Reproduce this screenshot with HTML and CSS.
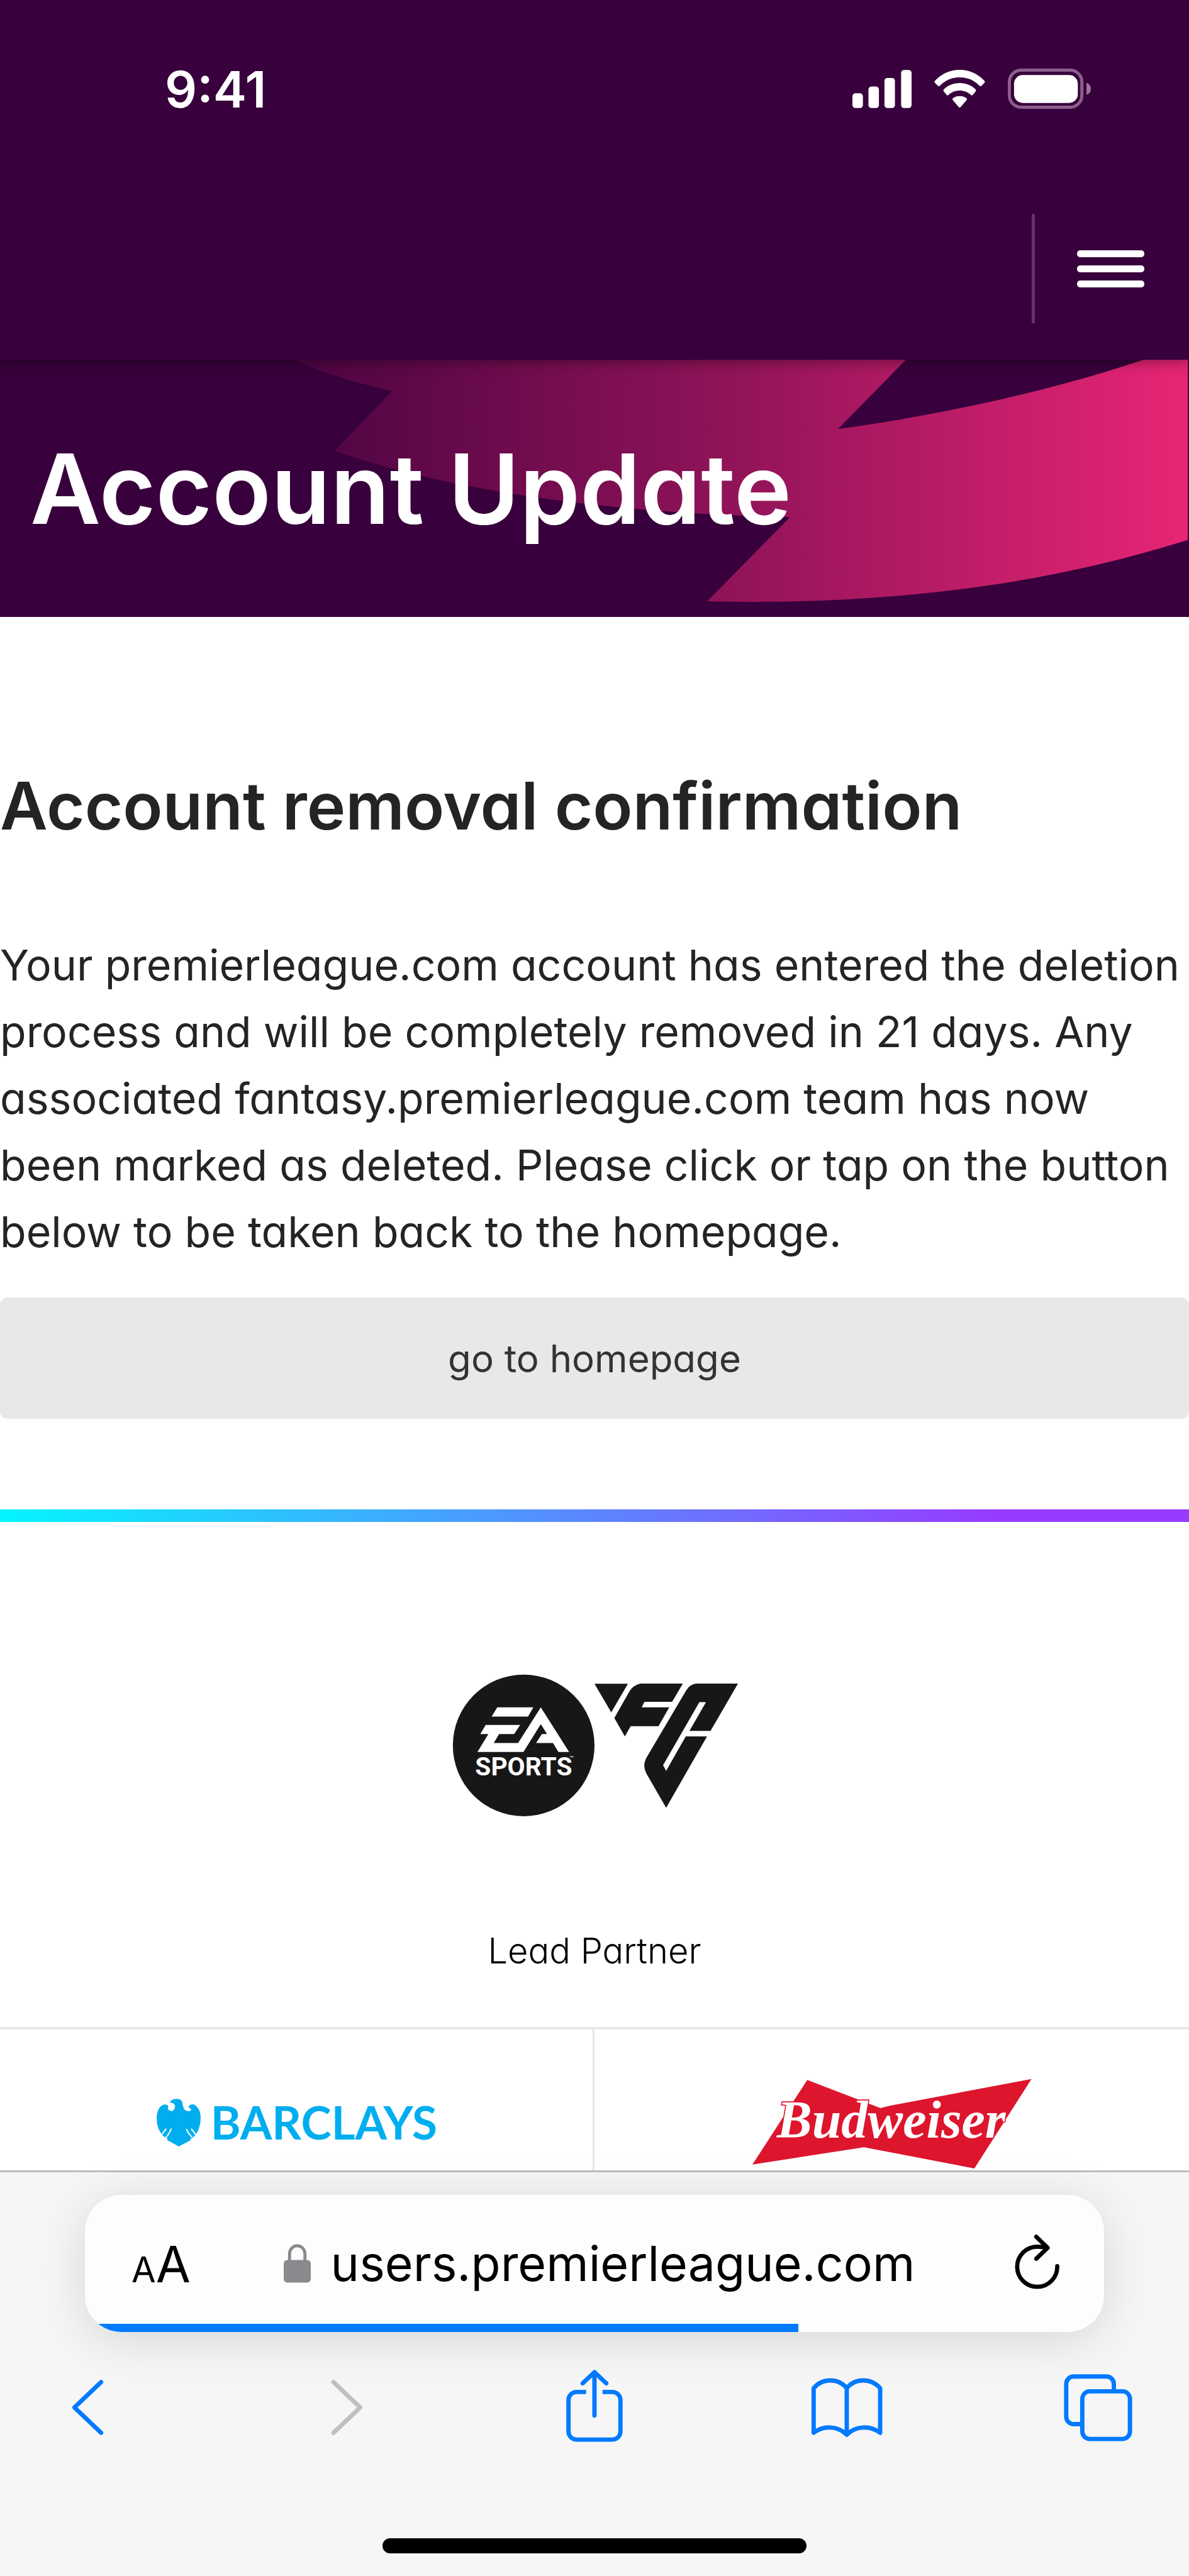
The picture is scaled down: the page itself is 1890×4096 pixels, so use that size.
FILE: index.html
```html
<!DOCTYPE html>
<html lang="en">
<head>
<meta charset="utf-8">
<meta name="viewport" content="width=device-width, initial-scale=1">
<title>Account Update</title>
<link rel="stylesheet" href="styles.css">
</head>
<body>
<div class="screen">
  <header class="top">
    <div class="status">
      <time class="status-time">9:41</time>
      <div class="status-icons">
        <svg class="icon-signal" viewBox="0 0 96 62" aria-hidden="true"><g fill="#fff"><rect x="0" y="38" width="17" height="24" rx="5"/><rect x="26" y="27" width="17" height="35" rx="5"/><rect x="52" y="13" width="17" height="49" rx="5"/><rect x="79" y="0" width="17" height="62" rx="5"/></g></svg>
        <svg class="icon-wifi" viewBox="0 0 82 62" aria-hidden="true"><g fill="#fff"><path d="M1.5 17.5C11 7 25 0 41 0S71 7 80.500 17.500Q82.500 19.500 80.500 21.500L76 26Q74.500 27.500 72.500 25.500C65 17.500 54 12.300 41 12.300S17 17.500 9.500 25.500Q7.500 27.500 6 26L1.500 21.500Q-.5 19.500 1.500 17.500Z"/><path d="M15.500 31.500C22 25 31 21.300 41 21.300S60 25 66.500 31.500Q68 33.500 66.500 35L62 40.500Q60.500 42 59 40.500C54 36 48 33.500 41 33.500S28 36 23 40.500Q21.500 42 20 40.500L15.500 35Q14 33.500 15.500 31.500Z"/><path d="M30 46C33 43.300 37 42.300 41 42.300S49 43.300 52 46Q53.500 47.500 52 49L42.500 60Q41 61.500 39.500 60L30 49Q28.500 47.500 30 46Z"/></g></svg>
        <svg class="icon-battery" viewBox="0 0 134 66" aria-hidden="true"><rect x="2.500" y="2.500" width="117" height="60" rx="19" fill="none" stroke="#8b5f8c" stroke-width="5"/><rect x="10" y="10.500" width="103" height="45" rx="14" fill="#fff"/><path d="M127 22.500Q134 26 134 33T127 42.500Z" fill="#9c789d"/></svg>
      </div>
    </div>
    <nav class="nav">
      <button class="menu" type="button" aria-label="Menu"><span></span><span></span><span></span></button>
    </nav>
  </header>

  <main class="page">
    <section class="banner">
      <svg class="ribbon" viewBox="0 581 1920 416" preserveAspectRatio="xMaxYMin slice" aria-hidden="true">
        <defs><linearGradient id="pink" gradientUnits="userSpaceOnUse" x1="475" y1="0" x2="1918" y2="0"><stop offset="0" stop-color="#4c0442"/><stop offset=".5" stop-color="#921459"/><stop offset="1" stop-color="#e82575"/></linearGradient></defs>
        <path fill="url(#pink)" d="M475 581H1463L1353 693C1510 672 1700 631 1846 581H1918V872C1740 928 1490 980 1142 971L1276 835C1000 830 730 795 540 728L633 632C570 617 515 600 475 581Z"/>
      </svg>
      <h1>Account Update</h1>
    </section>

    <section class="message">
      <h2>Account removal confirmation</h2>
      <p>Your premierleague.com account has entered the deletion process and will be completely removed in 21 days. Any associated fantasy.premierleague.com team has now been marked as deleted. Please click or tap on the button below to be taken back to the homepage.</p>
      <a class="home-button" href="#">go to homepage</a>
    </section>

    <section class="partners">
      <div class="lead">
        <svg class="ea-logo" viewBox="0 0 1560 840" role="img" aria-label="EA Sports FC">
          <g fill="#171717"><circle cx="437" cy="418" r="343"/><path d="M780 119H942L861 258Z"/><path d="M876 285L947 160Q968 124 1005 118H1208L1156 207H1022L1009 233H1142L1090 325H955L927 374Z"/><path d="M1222 155Q1240 122 1272 118H1475L1342 348H1240L1320 208H1288L1112 514L1127 541L1222 374H1325L1127 720L1030 552Q1012 515 1030 480Z"/></g>
          <g fill="#fff"><path d="M309 233H484L458 278H282Z"/><path d="M253 319H420L391 363H318L292 406H410L520 233L657 450H605L579 406H497L525 363H550L520 315L436 450H213L266 363H227Z"/><text class="ea-word" x="437" y="562" text-anchor="middle">SPORTS</text><text class="ea-mark" x="660" y="494">™</text></g>
        </svg>
        <p>Lead Partner</p>
      </div>
      <div class="partner-row">
        <div class="partner">
          <svg class="partner-logo" viewBox="0 0 451 80" role="img" aria-label="Barclays">
            <g transform="scale(.357 .333) translate(-147 -395)"><path fill="#00aeef" d="M207 414Q212 396 240 396Q262 398 263 415Q266 440 275 450Q283 457 296 455Q306 450 303 445Q290 440 292 432Q300 420 315 423Q346 440 346 490Q345 530 330 559L317 578L300 590V597L247 627L193 595L197 588L177 577L165 560Q147 530 147 490Q148 435 180 423Q198 423 201 434Q195 438 199 448Q206 457 218 455Q230 448 230 430Q228 415 207 414Z"/><path stroke="#fff" stroke-width="6" fill="none" d="M190 541L169 571M213 540Q205 565 189 582M303 541L325 571M281 542Q290 565 307 582"/></g>
            <text class="barclays" x="87" y="66">BARCLAYS</text>
          </svg>
        </div>
        <div class="partner">
          <svg class="partner-logo" viewBox="104 85 1354 436" role="img" aria-label="Budweiser">
            <path fill="#dd162e" d="M370 92L725 228L770 217L1457 87L1180 521L645 418L104 502Z"/>
            <text class="budweiser" x="222" y="372">Budweiser</text>
          </svg>
        </div>
      </div>
    </section>
  </main>

  <footer class="browser">
    <div class="address">
      <button class="text-size" type="button" aria-label="Text size"><span class="small-a">A</span>A</button>
      <label class="site">
        <svg class="icon-lock" viewBox="0 0 44 63" aria-hidden="true"><rect y="26" width="44" height="37" rx="6" fill="#8a898e"/><path d="M9.500 28V16a12.500 13 0 0 1 25 0V28" fill="none" stroke="#8a898e" stroke-width="5"/></svg>
        <input class="url" type="text" value="users.premierleague.com" aria-label="Address">
      </label>
      <button class="reload" type="button" aria-label="Reload"><svg viewBox="18 17 76 98" aria-hidden="true"><path d="M88.500 70A32.300 32.300 0 1 1 56 38.700Q65 38.700 73 40.500M54.700 22.700L73 40.500L54.700 58" fill="none" stroke="#000" stroke-width="6.800" stroke-linecap="round" stroke-linejoin="round"/></svg></button>
      <progress class="loading" max="100" value="70" aria-label="Page loading"></progress>
    </div>
    <div class="tools">
      <button type="button" aria-label="Back"><svg viewBox="0 0 122 124"><path d="M83 22L40 63L83 104"/></svg></button>
      <button type="button" aria-label="Forward" disabled><svg viewBox="0 0 122 124"><path d="M50 22L93 63L50 104"/></svg></button>
      <button type="button" aria-label="Share"><svg viewBox="-3 0 122 124"><path d="M61 76V6M42 24L61 6L80 24"/><path stroke-linecap="butt" d="M47.500 38H32A13 13 0 0 0 19 51V102A13 13 0 0 0 32 115H90A13 13 0 0 0 103 102V51A13 13 0 0 0 90 38H74"/></svg></button>
      <button type="button" aria-label="Bookmarks"><svg viewBox="0 0 122 124"><path d="M63 32C50 15 23 15 9.500 32V104C25 92 48 92 63 107C78 92 101 92 117 104V32C103 15 76 15 63 32V107"/></svg></button>
      <button type="button" aria-label="Tabs"><svg viewBox="0 0 122 124"><rect x="36" y="37" width="77" height="77" rx="12"/><path stroke-linecap="butt" d="M87 36V25A12 12 0 0 0 75 13H22A12 12 0 0 0 10 25V78A12 12 0 0 0 22 90H34"/></svg></button>
    </div>
    <div class="home-indicator"></div>
  </footer>
</div>
</body>
</html>
```
FILE: styles.css
```css
* {
  box-sizing: border-box;
}

body {
  margin: 0;
  font-family: Inter, "Liberation Sans", sans-serif;
  color: #242424;
  background: #fff;
}

h1, h2, p {
  margin: 0;
}

button {
  border: 0;
  padding: 0;
  background: none;
  font-family: inherit;
  color: inherit;
}

svg {
  display: block;
}

.screen {
  display: flex;
  flex-direction: column;
  height: 100vh;
}

/* Status bar and site header */
.top {
  position: relative;
  z-index: 1;
  background: #38003c;
  box-shadow: 0 3px 20px rgba(0, 0, 0, 0.4);
}

.status {
  display: flex;
  align-items: center;
  justify-content: space-between;
  height: 282px;
  padding: 0 156px 0 262px;
}

.status-time {
  color: #fff;
  font-size: 80px;
  font-weight: 600;
}

.status-icons {
  display: flex;
  gap: 36px;
}

.icon-signal {
  width: 94px;
}

.icon-wifi {
  width: 81px;
}

.icon-battery {
  width: 132px;
}

.nav {
  display: flex;
  align-items: center;
  justify-content: flex-end;
  height: 290px;
}

.menu {
  display: flex;
  flex-direction: column;
  justify-content: center;
  gap: 13px;
  width: 250px;
  height: 174px;
  padding: 0 71px 0 67px;
  border-left: 5px solid #633367;
}

.menu span {
  height: 11px;
  border-radius: 5px;
  background: #fff;
}

/* Page */
.page {
  flex: 1;
  min-height: 0;
  overflow-y: auto;
  scrollbar-width: none;
  font-feature-settings: "cv11";
}

.banner {
  position: relative;
  display: flex;
  align-items: center;
  height: 409px;
  padding: 0 48px;
  background: #38003c;
}

.ribbon {
  position: absolute;
  inset: 0;
  width: 100%;
  height: 100%;
}

.banner h1 {
  position: relative;
  color: #fff;
  font-size: 154px;
  font-weight: 600;
}

.message {
  padding: 240px 0 144px;
}

.message h2 {
  font-size: 104px;
  font-weight: 600;
  line-height: 120px;
}

.message p {
  margin-top: 140px;
  font-size: 68px;
  line-height: 106px;
}

.home-button {
  display: flex;
  align-items: center;
  justify-content: center;
  height: 193px;
  margin-top: 52px;
  border-radius: 12px;
  background: #e8e8e8;
  color: #333;
  font-size: 60px;
  text-decoration: none;
}

.partners::before {
  content: "";
  display: block;
  height: 20px;
  background: linear-gradient(90deg, #04f5ff, #963cff 83%);
}

.lead {
  display: flex;
  flex-direction: column;
  align-items: center;
  gap: 156px;
  padding: 218px 0 89px;
}

.ea-logo {
  width: 512px;
  height: 276px;
}

.ea-word {
  font-family: Roboto, sans-serif;
  font-size: 124px;
  font-weight: 700;
}

.ea-mark {
  font-size: 30px;
}

.lead p {
  color: #000;
  font-size: 56px;
  font-weight: 300;
  line-height: 64px;
}

.partner-row {
  display: grid;
  grid-template-columns: 1fr 1fr;
  border-top: 4px solid #e7e5e8;
}

.partner {
  display: flex;
  align-items: center;
  justify-content: center;
  height: 298px;
}

.partner:first-child {
  border-right: 3px solid #e7e5e8;
}

.partner-logo {
  width: 444px;
  overflow: visible;
}

.barclays {
  font-family: Lato, sans-serif;
  font-size: 74px;
  font-weight: 700;
  fill: #00aeef;
}

.budweiser {
  font-family: "Liberation Serif", serif;
  font-size: 256px;
  font-style: italic;
  font-weight: 700;
  fill: #fff;
  stroke: #dd162e;
  stroke-width: 10px;
  paint-order: stroke;
}

/* Browser toolbar */
.browser {
  padding: 36px 0;
  border-top: 3px solid #bdbdbd;
  background: #f6f6f6;
}

.address {
  position: relative;
  display: grid;
  grid-template-columns: 1fr auto 1fr;
  align-items: center;
  height: 218px;
  margin: 0 135px;
  padding: 0 69px 0 74px;
  border-radius: 58px;
  background: #fdfdfd;
  box-shadow: 0 12px 80px rgba(0, 0, 0, 0.13);
}

.text-size {
  justify-self: start;
  font-size: 80px;
  font-weight: 400;
  color: #000;
}

.small-a {
  font-size: 56px;
}

.site {
  display: flex;
  align-items: center;
  gap: 32px;
  padding-left: 10px;
}

.icon-lock {
  width: 43px;
}

.url {
  field-sizing: content;
  padding: 0;
  border: 0;
  background: none;
  color: #000;
  font-family: inherit;
  font-size: 77px;
}

.reload {
  justify-self: end;
}

.reload svg {
  width: 75px;
}

.loading {
  position: absolute;
  inset: 0;
  width: 100%;
  height: 100%;
  border: 0;
  border-radius: 58px;
  overflow: hidden;
  pointer-events: none;
  appearance: none;
  background: none;
}

.loading::-webkit-progress-bar {
  background: none;
}

.loading::-webkit-progress-value {
  background: linear-gradient(#007aff, #007aff) bottom / 100% 13px no-repeat;
}

.tools {
  display: flex;
  justify-content: space-between;
  margin-top: 58px;
  padding: 0 85px 0 79px;
  color: #007aff;
}

.tools svg {
  width: 120px;
  height: 122px;
  fill: none;
  stroke: currentColor;
  stroke-width: 7px;
  stroke-linecap: round;
  stroke-linejoin: round;
}

.tools button:disabled {
  color: #bfbfbf;
}

.home-indicator {
  width: 674px;
  max-width: 60%;
  height: 24px;
  margin: 148px auto 0;
  border-radius: 12px;
  background: #000;
}
```
